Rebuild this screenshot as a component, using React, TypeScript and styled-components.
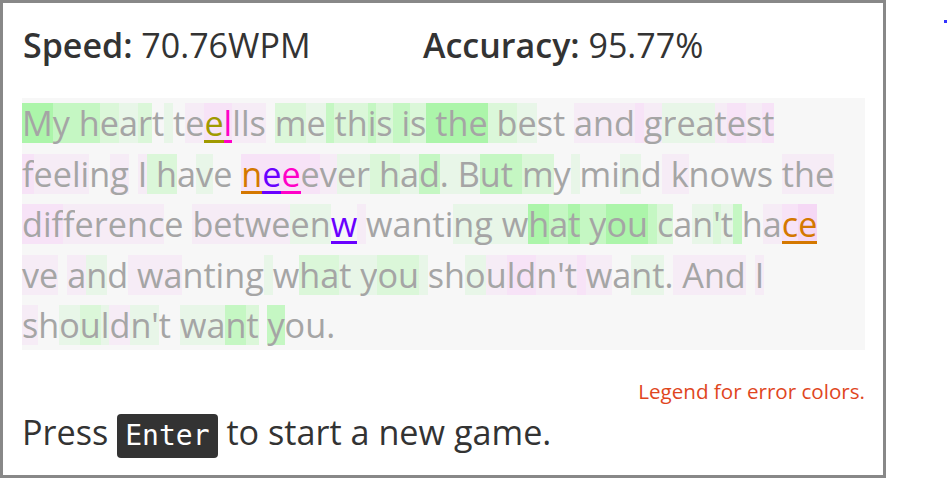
import React from 'react';
import styled, { createGlobalStyle } from 'styled-components';

type Heat = 'G' | 'g' | 'h' | 'i' | 'p' | 'q' | 'Q' | '.';

const heatColors: Record<Heat, string> = {
  G: '#acf5aa',
  g: '#c5f7c3',
  h: '#dbf7d9',
  i: '#e8f6e8',
  p: '#f6ecf6',
  q: '#f7e3f7',
  Q: '#f5d8f5',
  '.': 'transparent',
};

const errColors = {
  olive: '#a09a00',
  pink: '#ff00c8',
  orange: '#d47800',
  violet: '#6a00ff',
};

type ErrKind = keyof typeof errColors;

interface LineData {
  text: string;
  heat: string;
  errors: Record<number, ErrKind>;
}

// typed text, laid out by line as in the finished game
const lines: LineData[] = [
  {
    text: 'My heart teellls me this is the best and greatest',
    heat: 'Ggggh' + 'ih.i.' + 'pqqpp' + 'p.hig' + 'hhghg' + 'ghGGG' + 'Ghhi.' + '..ppp' + 'qpiii' + 'pqpq',
    errors: { 11: 'olive', 12: 'pink' },
  },
  {
    text: 'feeling I have neeever had. But my mind knows the',
    heat: 'qpppp' + '.p.ph' + 'h.i..' + 'qqqqp' + 'iihhi' + 'giiig' + 'ggh.i' + '..i.p' + 'p....' + '.ppp',
    errors: { 15: 'orange', 16: 'violet', 17: 'pink' },
  },
  {
    text: "difference betweenw wanting what you can't hace",
    heat: 'qqqpp' + 'pppp.' + '.pppp' + 'pii.p' + '.....' + 'iiiiG' + 'gGggG' + 'Ggh.i' + 'hig.p' + 'qQ',
    errors: { 18: 'violet', 45: 'orange', 46: 'orange' },
  },
  {
    text: "ve and wanting what you shouldn't want. And I",
    heat: 'pp.pi' + '.ppp.' + '....i' + '.hhii' + 'ihhi.' + '.ipqq' + 'pppqp' + '.ii.p' + 'ppp.p',
    errors: {},
  },
  {
    text: "shouldn't want you.",
    heat: 'p.ihi' + 'pii..' + 'iigh.' + 'g...',
    errors: {},
  },
];

const GlobalStyle = createGlobalStyle`
  body {
    margin: 0;
    background: #fff;
    font-family: 'Open Sans', 'Noto Sans', sans-serif;
    color: #333;
  }
`;

const Page = styled.div`
  display: flex;
  align-items: flex-start;
`;

const Board = styled.div`
  box-sizing: border-box;
  width: 886px;
  height: 478px;
  border: 3px solid #888;
  padding: 0 18px 0 19px;
  display: flex;
  flex-direction: column;
`;

const Stats = styled.div`
  display: grid;
  grid-template-columns: 400px 1fr;
  padding: 22px 0 0 1px;
  height: 40px;
  font-size: 34px;
  line-height: 40px;
  white-space: nowrap;
`;

const Stat = styled.div`
  b {
    font-weight: 600;
  }
`;

const Passage = styled.div`
  margin-top: 33px;
  padding: 5px 0;
  background: #f7f7f7;
  display: flex;
  flex-direction: column;
  gap: 10.5px;
`;

const Line = styled.div`
  display: flex;
  height: 40px;
`;

const Char = styled.span<{ $heat: Heat; $err?: ErrKind }>`
  display: block;
  box-sizing: border-box;
  height: 40px;
  white-space: pre;
  font-size: 34.2px;
  line-height: 40px;
  color: ${p => (p.$err ? errColors[p.$err] : '#a5a5a5')};
  background: ${p => heatColors[p.$heat]};
  border-bottom: ${p => (p.$err ? `3px solid ${errColors[p.$err]}` : 'none')};
`;

const Legend = styled.div`
  margin-top: 29px;
  text-align: right;
  font-size: 20.6px;
  line-height: 24px;
  color: #e0461e;
`;

const Prompt = styled.div`
  margin-top: 7px;
  font-size: 34.2px;
  line-height: 44px;
  white-space: nowrap;
`;

const Kbd = styled.kbd`
  display: inline-block;
  padding: 0 8px;
  border-radius: 4px;
  background: #333;
  color: #fff;
  font-family: 'DejaVu Sans Mono', monospace;
  font-size: 28px;
  line-height: 44px;
`;

const Marker = styled.span`
  width: 3px;
  height: 3px;
  margin: 20px 0 0 58px;
  background: #3333ff;
`;

const App = () => (
  <Page>
    <GlobalStyle />
    <Board>
      <Stats>
        <Stat>
          <b>Speed:</b> 70.76WPM
        </Stat>
        <Stat>
          <b>Accuracy:</b> 95.77%
        </Stat>
      </Stats>
      <Passage>
        {lines.map((line, li) => (
          <Line key={li}>
            {line.text.split('').map((ch, ci) => (
              <Char key={ci} $heat={(line.heat[ci] || '.') as Heat} $err={line.errors[ci]}>
                {ch}
              </Char>
            ))}
          </Line>
        ))}
      </Passage>
      <Legend>Legend for error colors.</Legend>
      <Prompt>
        Press <Kbd>Enter</Kbd> to start a new game.
      </Prompt>
    </Board>
    <Marker />
  </Page>
);

export default App;
